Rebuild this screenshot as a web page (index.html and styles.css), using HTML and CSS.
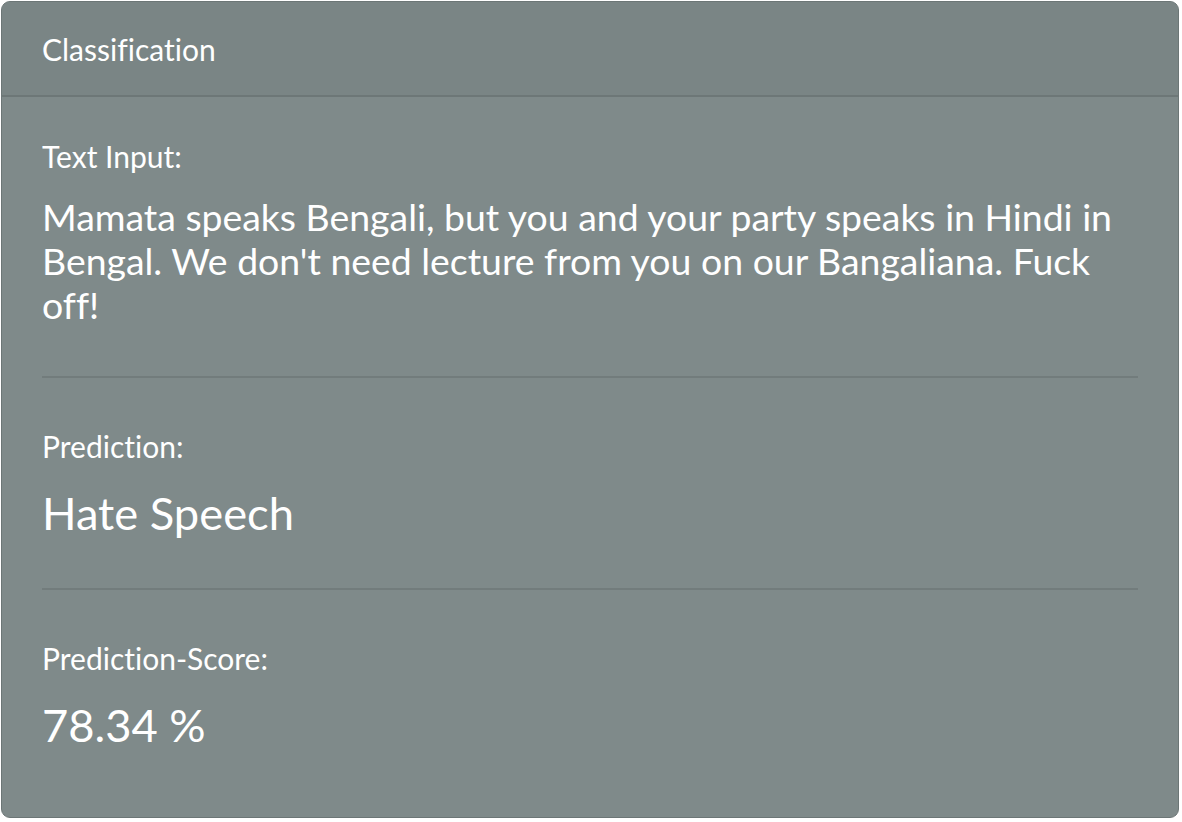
FILE: index.html
```html
<!DOCTYPE html>
<html>
<head>
<meta charset="utf-8">
<link rel="stylesheet" href="styles.css">
</head>
<body>
<div class="card">
  <div class="card-header">Classification</div>
  <div class="card-body">
    <section class="block">
      <div class="label">Text Input:</div>
      <p class="text">Mamata speaks Bengali, but you and your party speaks in Hindi in Bengal. We don't need lecture from you on our Bangaliana. Fuck off!</p>
    </section>
    <hr class="sep">
    <section class="block">
      <div class="label">Prediction:</div>
      <div class="big">Hate Speech</div>
    </section>
    <hr class="sep">
    <section class="block">
      <div class="label">Prediction-Score:</div>
      <div class="big score">78.34 %</div>
    </section>
  </div>
</div>
</body>
</html>
```
FILE: styles.css
```css
html, body {
  margin: 0;
  padding: 0;
  background: #ffffff;
}
body {
  padding: 1px 3px 4px 1px;
  font-family: Lato, "Noto Sans", sans-serif;
  font-variant-ligatures: none;
  color: #ffffff;
}
.card {
  background: #7f8a8a;
  border: 1px solid #6c7676;
  border-radius: 9px;
  overflow: hidden;
  height: 817px;
  box-sizing: border-box;
}
.card-header {
  background: #7a8585;
  border-bottom: 2px solid #6d7777;
  padding: 29px 40px 28px 40px;
  font-size: 30px;
  line-height: 36px;
}
.card-body {
  padding: 41px 40px 0 40px;
}
.block {
  display: flex;
  flex-direction: column;
}
.label {
  font-size: 30px;
  line-height: 36px;
}
.text {
  margin: 21px 0 0 0;
  font-size: 37.4px;
  line-height: 44px;
}
.sep {
  margin: 49px 0 50px 0;
  border: 0;
  border-top: 2px solid #727c7c;
}
.big {
  margin-top: 23px;
  font-size: 45.3px;
  line-height: 52px;
}
```
